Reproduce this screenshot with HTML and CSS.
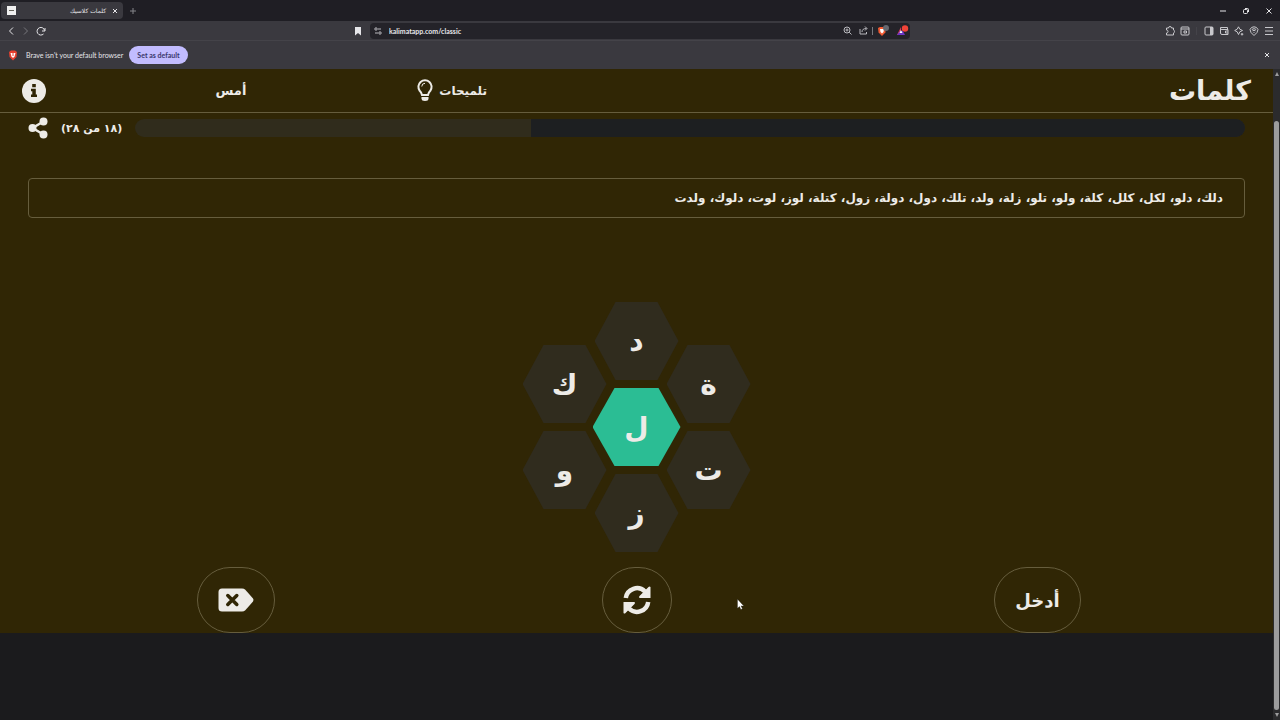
FILE: index.html
```html
<!DOCTYPE html>
<html lang="ar">
<head>
<meta charset="utf-8">
<meta name="viewport" content="width=device-width, initial-scale=1">
<title>كلمات كلاسيك</title>
<link rel="stylesheet" href="styles.css">
</head>
<body>
<div class="tabs">
  <div class="tab">
    <svg class="favicon" width="9" height="9" viewBox="0 0 9 9"><path fill="#f0f0f0" stroke="none" d="M0 0h9v9H0z"/><path stroke="#66645c" d="M2 4.500h5"/></svg>
    <span class="tab-title" dir="rtl">كلمات كلاسيك</span>
    <button class="icon-btn" aria-label="Close tab"><svg width="6" height="6" viewBox="0 0 6 6"><path d="M1 1l4 4M5 1L1 5"/></svg></button>
  </div>
  <button class="icon-btn new-tab" aria-label="New tab"><svg width="6" height="6" viewBox="0 0 6 6"><path d="M3 0v6M0 3h6"/></svg></button>
  <div class="window-controls">
    <button class="icon-btn" aria-label="Minimize"><svg width="6" height="6" viewBox="0 0 6 6"><path d="M0 3h6"/></svg></button>
    <button class="icon-btn" aria-label="Restore"><svg width="6" height="6" viewBox="0 0 6 6"><rect x=".5" y="1.5" width="4" height="4" rx="1"/><path d="M2 .5h2.500q1 0 1 1V4"/></svg></button>
    <button class="icon-btn" aria-label="Close window"><svg width="6" height="6" viewBox="0 0 6 6"><path d="M.5.5l5 5M5.500.5l-5 5"/></svg></button>
  </div>
</div>

<div class="toolbar">
  <div class="nav">
    <button class="icon-btn" aria-label="Back"><svg width="10" height="10" viewBox="0 0 10 10"><path d="M7 1.500L3.500 5 7 8.500"/></svg></button>
    <button class="icon-btn dim" aria-label="Forward"><svg width="10" height="10" viewBox="0 0 10 10"><path d="M3 1.500L6.500 5 3 8.500"/></svg></button>
    <button class="icon-btn" aria-label="Reload"><svg width="10" height="10" viewBox="0 0 10 10"><path d="M7.500 8A3.800 3.800 0 1 1 8.600 4.500M9 2v3H6"/></svg></button>
  </div>
  <div class="address">
    <button class="icon-btn" aria-label="Bookmark"><svg width="8" height="10" viewBox="0 0 8 10"><path class="solid" d="M1 1h6v8.500L4 7 1 9.500z"/></svg></button>
    <div class="address-box">
      <svg width="8" height="8" viewBox="0 0 8 8"><circle cx="2" cy="2" r="1.200"/><circle cx="6" cy="6" r="1.200"/><path d="M4 2h3M1 6h3"/></svg>
      <input class="url" type="text" aria-label="Address" value="kalimatapp.com/classic">
      <button class="icon-btn" aria-label="Zoom"><svg width="9" height="9" viewBox="0 0 9 9"><circle cx="4" cy="4" r="3"/><path d="M6.200 6.200L8.500 8.500M2.500 4h3M4 2.500v3"/></svg></button>
      <button class="icon-btn" aria-label="Share page"><svg width="9" height="9" viewBox="0 0 9 9"><path d="M1 3v5h6.500V6M3 6q0-3.500 4.500-3.500M6 .5l2 2-2 2"/></svg></button>
      <span class="divider"></span>
      <button class="icon-btn" aria-label="Brave shields"><svg width="12" height="12" viewBox="0 0 12 12"><path fill="#f15a32" stroke="none" d="M1 3l2-1h4l2 1-.6 4.500L5 11 1.600 7.500z"/><path fill="#fff" stroke="none" d="M3 4h4L6.500 7 5 8.500 3.500 7z"/><circle cx="9" cy="3" r="3" fill="#666970" stroke="none"/></svg></button>
      <button class="icon-btn" aria-label="Rewards"><svg width="13" height="12" viewBox="0 0 13 12"><path fill="#e8345c" stroke="none" d="M5 2L1 10h4z"/><path fill="#6b35c4" stroke="none" d="M1 10h8L7 6H4z"/><path fill="#fff" stroke="none" d="M5 5L6.500 8h-3z"/><circle cx="9" cy="3.500" r="3.200" fill="#f04438" stroke="none"/></svg></button>
    </div>
  </div>
  <div class="tools">
    <button class="icon-btn" aria-label="Extensions"><svg width="10" height="10" viewBox="0 0 10 10"><path d="M1.500 2h2q0-1.500 1.500-1.500T6.500 2h2v2q1 .2 1 1.500T8.500 7v2h-7V7Q3 7 3 5.500T1.500 4z"/></svg></button>
    <button class="icon-btn" aria-label="Reader"><svg width="10" height="10" viewBox="0 0 10 10"><rect x="1" y="1" width="8" height="8" rx="1"/><path d="M1 3h8M4 5h2.500v2H4z"/></svg></button>
    <span class="divider faint"></span>
    <button class="icon-btn" aria-label="Sidebar"><svg width="10" height="10" viewBox="0 0 10 10"><rect x="1" y="1" width="8" height="8" rx="1"/><path class="solid" d="M6 1h3v8H6z"/></svg></button>
    <button class="icon-btn" aria-label="Wallet"><svg width="10" height="10" viewBox="0 0 10 10"><path d="M8.500 3.500V1.500h-7V7q0 1.500 1.500 1.500h6v-5h-6q-1.500 0-1.500-1M9 5H6.500v2H9"/></svg></button>
    <button class="icon-btn" aria-label="Assistant"><svg width="10" height="10" viewBox="0 0 10 10"><path d="M4.500.8L5.800 3.200 8.500 4.500 5.800 5.800 4.500 8.500 3.200 5.800.7 4.500l2.500-1.300zM8 7v2.500M6.800 8.200h2.500"/></svg></button>
    <button class="icon-btn" aria-label="VPN"><svg width="10" height="10" viewBox="0 0 10 10"><path d="M5 9.500Q1 6.500 1 3.500 2 .8 5 .8T9 3.500Q9 6.500 5 9.500zM2.800 3.500Q5 1.800 7.200 3.500M3.500 4.800Q5 3.800 6.500 4.800"/><circle class="solid" cx="5" cy="6.300" r=".6"/></svg></button>
    <button class="icon-btn" aria-label="Menu"><svg width="10" height="10" viewBox="0 0 10 10"><path d="M1 1.500h8M1 5h8M1 8.500h8"/></svg></button>
  </div>
</div>

<div class="notice">
  <svg width="10" height="11" viewBox="0 0 10 11"><path fill="#e5402f" stroke="none" d="M1 2l2-1.500h4L9 2l-.5 5L5 10.500 1.500 7z"/><path fill="#fff" stroke="none" d="M2.500 3h5L6.500 6.500 5 8 3.500 6.500z"/><path stroke="#e5402f" d="M5 3v3"/></svg>
  <span>Brave isn't your default browser</span>
  <button class="default-btn">Set as default</button>
  <button class="icon-btn dismiss" aria-label="Dismiss"><svg width="6" height="6" viewBox="0 0 6 6"><path d="M1 1l4 4M5 1L1 5"/></svg></button>
</div>

<div class="viewport">
  <div class="document">
    <main class="game">
      <header class="header">
        <button class="link info" aria-label="معلومات"><svg width="24" height="24" viewBox="0 0 24 24"><circle cx="12" cy="12" r="12" fill="#edebe7"/><path fill="#302605" d="M10.200 5h3.600v3.200h-3.600zM9 9.800h4.800v5.700H15v2.500H9v-2.500h1.300v-3.200H9z"/></svg></button>
        <button class="link" dir="rtl">أمس</button>
        <button class="link hints" dir="ltr"><svg width="16" height="23" viewBox="0 0 16 23"><path fill="none" stroke="#edebe7" stroke-width="2" d="M5 16Q4.500 13.500 2.700 11.800A6.600 6.600 0 1 1 13.300 11.800Q11.500 13.500 11 16z"/><path fill="none" stroke="#edebe7" stroke-width="1" d="M4.800 7.500A3.200 3.200 0 0 1 8 4.300"/><path fill="#edebe7" d="M4.500 18h7v1.500Q11.500 22 8 22T4.500 19.500z"/></svg><span dir="rtl">تلميحات</span></button>
        <h1 class="logo" dir="rtl">كلمات</h1>
      </header>

      <section class="progress-row">
        <button class="link" aria-label="مشاركة"><svg width="20" height="22" viewBox="0 0 20 22"><path fill="none" stroke="#edebe7" stroke-width="2.500" d="M15.500 4.500L4.500 11l11 6.500"/><g fill="#edebe7"><circle cx="15.500" cy="4.500" r="4"/><circle cx="4.500" cy="11" r="4"/><circle cx="15.500" cy="17.500" r="4"/></g></svg></button>
        <span class="count" dir="rtl">(١٨ من ٢٨)</span>
        <div class="bar" dir="rtl" role="progressbar" aria-valuenow="18" aria-valuemax="28" aria-label="التقدم"><div class="bar-fill" style="width:64.300%"></div></div>
      </section>

      <section class="words" dir="rtl">دلك، دلو، لكل، كلل، كلة، ولو، تلو، زلة، ولد، تلك، دول، دولة، زول، كتلة، لوز، لوت، دلوك، ولدت</section>

      <section class="hive">
        <button class="hex top">د</button>
        <button class="hex upper-left">ك</button>
        <button class="hex upper-right">ة</button>
        <button class="hex center">ل</button>
        <button class="hex lower-left">و</button>
        <button class="hex lower-right">ت</button>
        <button class="hex bottom">ز</button>
      </section>

      <section class="actions">
        <button class="action" aria-label="حذف"><svg width="36" height="24" viewBox="0 0 36 24"><path fill="#edebe7" d="M4 .5h20q2 0 3.300 1.300l7.500 8.500q1.300 1.700 0 3.400l-7.500 8.500Q26 23.500 24 23.500H4q-3.500 0-3.500-3.500V4Q.5.5 4 .5z"/><path fill="none" stroke="#302605" stroke-width="3.500" stroke-linecap="round" d="M9.800 7.500l9 9M18.800 7.500l-9 9"/></svg></button>
        <button class="action" aria-label="خلط"><svg width="28" height="30" viewBox="0 0 28 30"><path fill="none" stroke="#edebe7" stroke-width="4.500" d="M2.800 13A11.300 11.300 0 0 1 22 6.500M25.200 17A11.300 11.300 0 0 1 6 23.500"/><path fill="#edebe7" d="M27.500 2v11h-11q-1-1 0-2L25.500 2q1-1 2 0zM.5 28V17h11q1 1 0 2L2.500 28q-1 1-2 0z"/></svg></button>
        <button class="action" dir="rtl">أدخل</button>
      </section>
    </main>
  </div>
  <div class="scrollbar" aria-hidden="true"><span class="arrow-up"></span><span class="thumb"></span><span class="arrow-down"></span></div>
</div>

<svg class="cursor" width="7" height="11" viewBox="0 0 7 11"><path fill="#fff" stroke="#222" stroke-width=".3" d="M.5.2v9L2.500 7.500l1.400 3 1.500-.7-1.400-2.900h2.800z"/></svg>
</body>
</html>
```

FILE: styles.css
```css
* { box-sizing: border-box; }

body {
  margin: 0;
  min-height: 100vh;
  display: flex;
  flex-direction: column;
  background: #1b1b1d;
  color: #edebe7;
  font-family: "DejaVu Sans", sans-serif;
}

button {
  margin: 0;
  padding: 0;
  border: 0;
  background: none;
  color: inherit;
  font-family: inherit;
}

svg { display: block; flex: none; }

.tabs, .toolbar, .notice {
  display: flex;
  align-items: center;
  color: #e6e6e9;
  font-family: Roboto, "DejaVu Sans", sans-serif;
  font-size: 7px;
}

.tabs svg, .toolbar svg, .notice svg { fill: none; stroke: currentColor; }
.toolbar .solid { fill: currentColor; stroke: none; }

.icon-btn { display: flex; align-items: center; justify-content: center; }
.dim { color: #77777c; }

.tabs { height: 21px; background: #1f1e24; padding: 0 8px 0 1px; }
.tab {
  display: flex;
  align-items: center;
  gap: 6px;
  width: 122px;
  height: 17px;
  padding: 0 5px 0 6px;
  border-radius: 4px;
  background: #3a393f;
}
.tab-title { flex: 1; font-family: "DejaVu Sans", sans-serif; font-size: 6px; }
.new-tab { margin-left: 7px; color: #85858a; }
.window-controls { display: flex; gap: 17px; margin-left: auto; }

.toolbar {
  display: grid;
  grid-template-columns: 1fr 556px 1fr;
  height: 20px;
  padding: 0 6px;
  background: #3a393f;
  border-bottom: 1px solid #444349;
}
.nav { display: flex; gap: 5px; }
.address { display: flex; align-items: center; gap: 8px; margin: 0 8px 0 -8px; }
.address-box {
  flex: 1;
  display: flex;
  align-items: center;
  gap: 7px;
  height: 16px;
  padding: 0 1px 0 4px;
  border-radius: 4px;
  background: #242329;
  color: #b9b9be;
}
.url {
  flex: 1;
  min-width: 0;
  padding: 0;
  border: 0;
  background: none;
  color: #e6e6e9;
  font: inherit;
}
.divider { width: 1px; height: 8px; margin: 0 -3px; background: #77777c; }
.faint { background: #444349; margin: 0 2px 0 1px; }
.tools { display: flex; align-items: center; justify-content: flex-end; gap: 5px; color: #c8c8cc; }

.notice { height: 28px; gap: 8px; padding: 0 10px 0 8px; background: #3a393f; }
.notice span { margin-right: -2px; }
.default-btn {
  height: 18px;
  padding: 0 8px;
  border-radius: 9px;
  background: #c2bcff;
  color: #39366b;
  font-size: 7px;
}
.dismiss { margin-left: auto; }
.notice, .default-btn, .url { font-family: Lato, sans-serif; font-weight: 700; }
.notice { font-weight: 400; }

.viewport { flex: 1; display: flex; }
.document { flex: 1; min-width: 0; }
.game { background: #302605; }

.header {
  display: grid;
  grid-template-columns: 8fr 18fr 18fr 56fr;
  align-items: center;
  height: 44px;
  padding: 0 22px;
  border-bottom: 1px solid #665d3d;
}
.link { display: flex; align-items: center; justify-content: center; font-size: 13px; font-weight: 700; }
.info { justify-self: start; }
.hints { gap: 6px; font-size: 12px; }
.logo { margin: 0; justify-self: end; font-size: 27px; line-height: 32px; }

.progress-row { display: flex; align-items: center; gap: 13px; height: 30px; padding: 0 28px; }
.count { font-size: 11px; font-weight: 700; }
.bar { flex: 1; height: 18px; border-radius: 9px; background: #302c1c; overflow: hidden; }
.bar-fill { height: 100%; background: #1d1f21; }

.words {
  margin: 35px 28px 0;
  padding: 9px 21px;
  border: 1px solid #665d3d;
  border-radius: 4px;
  font-size: 12px;
  font-weight: 700;
  line-height: 20px;
}

.hive {
  display: grid;
  grid-template-columns: repeat(3, 72px);
  grid-template-rows: repeat(6, 43px);
  justify-content: center;
  align-items: center;
  justify-items: center;
  padding: 80px 0 11px;
}
.hex {
  width: 84px;
  height: 78px;
  clip-path: polygon(25% 0, 75% 0, 100% 50%, 75% 100%, 25% 100%, 0 50%);
  background: #302c1e;
  font-size: 28px;
  font-weight: 700;
}
.top { grid-area: 1 / 2 / span 2; }
.upper-left { grid-area: 2 / 1 / span 2; }
.upper-right { grid-area: 2 / 3 / span 2; }
.center { grid-area: 3 / 2 / span 2; width: 88px; background: #2bbd94; }
.lower-left { grid-area: 4 / 1 / span 2; }
.lower-right { grid-area: 4 / 3 / span 2; }
.bottom { grid-area: 5 / 2 / span 2; }

.actions { display: grid; grid-template-columns: repeat(3, 1fr); justify-items: center; padding: 0 35px; }
.action {
  display: flex;
  align-items: center;
  justify-content: center;
  height: 66px;
  padding: 0 20px;
  border: 1px solid #665d3d;
  border-radius: 33px;
  font-size: 18px;
  font-weight: 700;
}

.scrollbar {
  display: flex;
  flex-direction: column;
  align-items: center;
  width: 7px;
  padding: 3px 0;
  background: #2b2b2d;
}
.thumb { flex: 1; width: 5px; margin: 45px 0 3px; border-radius: 3px; background: #9c9c9d; }
.arrow-up, .arrow-down { border: 2px solid transparent; }
.arrow-up { border-top: 0; border-bottom: 4px solid #9c9c9d; }
.arrow-down { border-bottom: 0; border-top: 4px solid #9c9c9d; }

.cursor { position: absolute; left: 737px; top: 599px; }
```
